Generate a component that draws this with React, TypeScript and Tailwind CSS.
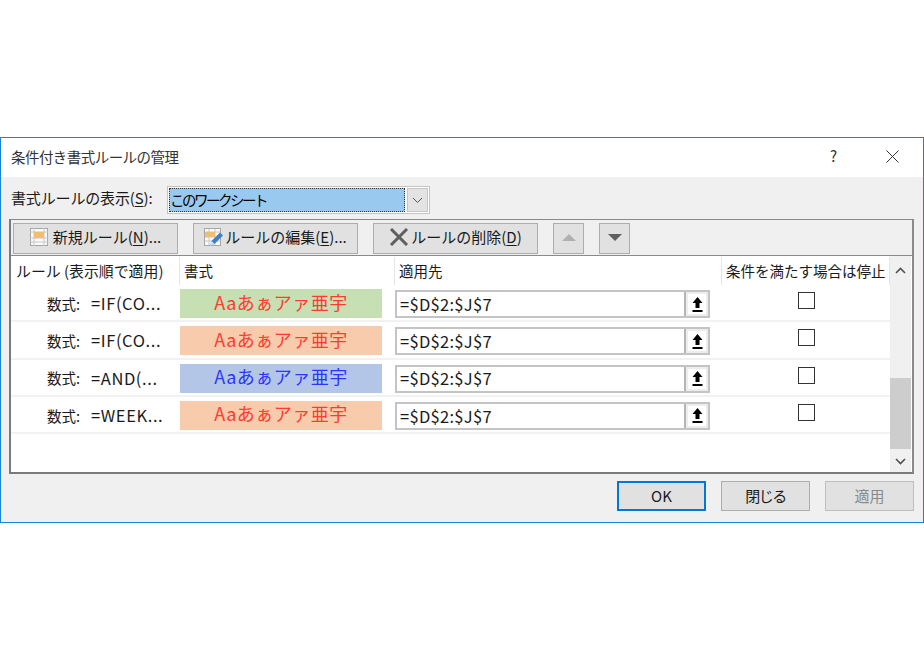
const font = '[font-family:"Noto_Sans_CJK_JP","Liberation_Sans",sans-serif]';

type Rule = { formula: string; bg: string; color: string };

const rules: Rule[] = [
  { formula: "=IF(CO...", bg: "bg-[#c6e0b4]", color: "text-[#ff3b30]" },
  { formula: "=IF(CO...", bg: "bg-[#f8cbad]", color: "text-[#ff3b30]" },
  { formula: "=AND(...", bg: "bg-[#b4c6e7]", color: "text-[#2a35ff]" },
  { formula: "=WEEK...", bg: "bg-[#f8cbad]", color: "text-[#ff3b30]" },
];

function NewIcon() {
  return (
    <svg width="18" height="18" viewBox="0 0 18 18" className="mr-[5px] shrink-0">
      <rect x="0.5" y="0.5" width="17" height="17" fill="#fafafa" stroke="#a6a6a6" />
      <path d="M0 4h18M0 10h18M0 14h18M4 0v18M14 0v18" stroke="#c8c8c8" strokeWidth="1" fill="none" />
      <rect x="4" y="4" width="10" height="6" fill="#f0bd72" />
    </svg>
  );
}

function EditIcon() {
  return (
    <svg width="20" height="20" viewBox="0 0 20 20" className="mr-px shrink-0">
      <rect x="0.5" y="1.5" width="16" height="17" fill="#fafafa" stroke="#a6a6a6" />
      <path d="M1 5h15M1 10h15M1 14h15M5 2v16M11 2v16" stroke="#c8c8c8" fill="none" />
      <rect x="1" y="5" width="10" height="5" fill="#f0bd72" />
      <path d="M6 19l1.5-5L16 5.5l3 3L10.5 17z" fill="#3f80c4" />
      <path d="M6 19l1.5-5 3 3z" fill="#d5e3f0" />
    </svg>
  );
}

function DeleteIcon() {
  return (
    <svg width="20" height="18" viewBox="0 0 20 18" className="mr-[2px] shrink-0">
      <path d="M2 1l16 16M18 1L2 17" stroke="#5f5f5f" strokeWidth="3" fill="none" />
    </svg>
  );
}

function UploadArrow() {
  return (
    <svg width="11" height="15" viewBox="0 0 11 15">
      <path d="M5.5 0L10.5 6H7.5V11H3.5V6H0.5z" fill="#000" />
      <rect x="0.5" y="13" width="10" height="2" fill="#000" />
    </svg>
  );
}

function Underlined({ before, letter, after }: { before: string; letter: string; after: string }) {
  return (
    <span>
      {before}
      <span className="underline underline-offset-2">{letter}</span>
      {after}
    </span>
  );
}

function ToolButton({ width, className, children }: { width: string; className?: string; children: React.ReactNode }) {
  return (
    <button className={`flex h-[31px] items-center justify-center border border-[#adadad] bg-[#e1e1e1] pb-[2px] ${width} ${className ?? ""}`}>
      {children}
    </button>
  );
}

export default function App() {
  return (
    <div className={`min-h-[660px] bg-white pt-[137px] text-[15px] text-[#1a1a1a] ${font}`}>
      <div className="flex h-[386px] w-[924px] flex-col border border-[#1883d7] bg-[#f0f0f0]">
        {/* title bar */}
        <div className="flex h-[39px] shrink-0 items-center bg-white pb-[2px] pl-[10px] pr-[24px] text-[#333]">
          <span className="text-[14.5px] tracking-[-0.55px]">条件付き書式ルールの管理</span>
          <span className="ml-auto mr-[49px] text-[15px]">?</span>
          <svg width="13" height="13" viewBox="0 0 13 13">
            <path d="M0.5 0.5l12 12M12.5 0.5l-12 12" stroke="#333" fill="none" />
          </svg>
        </div>

        {/* display selector */}
        <div className="mt-[9px] flex h-[28px] shrink-0 items-center pl-[10px]">
          <span className="w-[156px] pb-[4px] tracking-[-0.15px]">
            <Underlined before="書式ルールの表示(" letter="S" after="):" />
          </span>
          <div className="flex h-[28px] w-[263px] items-center border border-[#c4c4c4] bg-white p-px">
            <div className="flex h-full w-[236px] items-center border border-dotted border-[#333] bg-[#99c9ef] text-[14.5px] leading-none tracking-[-2.5px] text-black">
              このワークシート
            </div>
            <div className="ml-[2px] flex h-full flex-1 items-center justify-center border border-[#c4c4c4] bg-[#e3e3e3]">
              <svg width="11" height="7" viewBox="0 0 11 7">
                <path d="M1 1l4.5 4.5L10 1" stroke="#555" fill="none" />
              </svg>
            </div>
          </div>
        </div>

        {/* rules frame */}
        <div className="ml-[8px] mr-[9px] mt-[5px] flex h-[255px] shrink-0 flex-col border-2 border-t-1 border-[#7a7a7a] border-r-[#8a8a8a] border-t-[#8a8a8a]">
          <div className="flex h-[36px] shrink-0 items-center border-b border-[#8a8a8a] pl-[2px] pt-px">
            <ToolButton width="w-[165px]">
              <NewIcon />
              <Underlined before="新規ルール(" letter="N" after=")..." />
            </ToolButton>
            <ToolButton width="w-[165px]" className="ml-[15px]">
              <EditIcon />
              <Underlined before="ルールの編集(" letter="E" after=")..." />
            </ToolButton>
            <ToolButton width="w-[165px]" className="ml-[15px]">
              <DeleteIcon />
              <Underlined before="ルールの削除(" letter="D" after=")" />
            </ToolButton>
            <ToolButton width="w-[31px]" className="ml-[15px]">
              <svg width="14" height="7" viewBox="0 0 14 7">
                <path d="M7 0l7 7H0z" fill="#b0b0b0" />
              </svg>
            </ToolButton>
            <ToolButton width="w-[31px]" className="ml-[15px]">
              <svg width="14" height="7" viewBox="0 0 14 7">
                <path d="M0 0h14L7 7z" fill="#5f5f5f" />
              </svg>
            </ToolButton>
          </div>

          <div className="flex min-h-0 flex-1 bg-white">
            <div className="w-[879px] shrink-0">
              <div className="flex h-[29px] items-start pt-[1px]">
                <div className="flex h-[28px] w-[169px] items-center border-r border-[#e5e5e5] pl-[5px] text-[14.9px]">ルール (表示順で適用)</div>
                <div className="flex h-[28px] w-[215px] items-center border-r border-[#e5e5e5] pl-[4px] text-[14.5px]">書式</div>
                <div className="flex h-[28px] w-[327px] items-center border-r border-[#e5e5e5] pl-[4px] text-[14.5px]">適用先</div>
                <div className="flex h-[28px] flex-1 items-center whitespace-nowrap border-r border-[#e5e5e5] pl-[4px] text-[14.5px]">条件を満たす場合は停止</div>
              </div>
              {rules.map((r, i) => (
                <div key={i} className="flex h-[37.33px] items-start border-b-2 border-[#f2f2f2] pt-[4px]">
                  <div className="flex h-[29px] w-[169px] items-center whitespace-nowrap pl-[36px] text-[14.5px]">
                    <span className="w-[44px] shrink-0">数式:</span>
                    <span className="text-[16.5px] tracking-[0.6px]">{r.formula}</span>
                  </div>
                  <div className="w-[215px]">
                    <div className={`flex h-[29px] w-[202px] items-center justify-center pb-[3px] text-[18px] tracking-[0.5px] ${r.bg} ${r.color}`}>
                      Aaあぁアァ亜宇
                    </div>
                  </div>
                  <div className="w-[327px] pt-px">
                    <div className="flex h-[28px] w-[315px] border-2 border-[#c4c4c4] bg-white">
                      <div className="flex flex-1 items-center pl-[3px] text-[16.5px] tracking-[0.3px]">=$D$2:$J$7</div>
                      <div className="flex w-[24px] items-center justify-center border-l-2 border-[#b5b5b5] bg-[#ededed] p-[2px]">
                        <div className="flex h-full w-full items-center justify-center bg-white">
                          <UploadArrow />
                        </div>
                      </div>
                    </div>
                  </div>
                  <div className="flex flex-1 justify-center pt-[3px]">
                    <div className="h-[17px] w-[17px] border border-[#333] bg-white" />
                  </div>
                </div>
              ))}
            </div>

            {/* scrollbar */}
            <div className="flex w-[21px] shrink-0 flex-col bg-[#f0f0f0]">
              <div className="flex h-[28px] items-center justify-center">
                <svg width="11" height="7" viewBox="0 0 11 7">
                  <path d="M1 6l4.5-4.5L10 6" stroke="#505050" strokeWidth="1.6" fill="none" />
                </svg>
              </div>
              <div className="mt-[94px] h-[71px] bg-[#cdcdcd]" />
              <div className="mt-auto flex h-[21px] items-center justify-center">
                <svg width="11" height="7" viewBox="0 0 11 7">
                  <path d="M1 1l4.5 4.5L10 1" stroke="#505050" strokeWidth="1.6" fill="none" />
                </svg>
              </div>
            </div>
          </div>
        </div>

        {/* dialog buttons */}
        <div className="mt-[7px] flex justify-end gap-[15px] pr-[9px]">
          <button className="h-[30px] w-[89px] border-2 border-[#0078d7] bg-[#e1e1e1]">OK</button>
          <button className="h-[30px] w-[89px] border border-[#adadad] bg-[#e1e1e1] tracking-[-1.5px]">閉じる</button>
          <button className="h-[30px] w-[89px] border border-[#bfbfbf] bg-[#e1e1e1] text-[#8a8a8a]">適用</button>
        </div>
      </div>
    </div>
  );
}
